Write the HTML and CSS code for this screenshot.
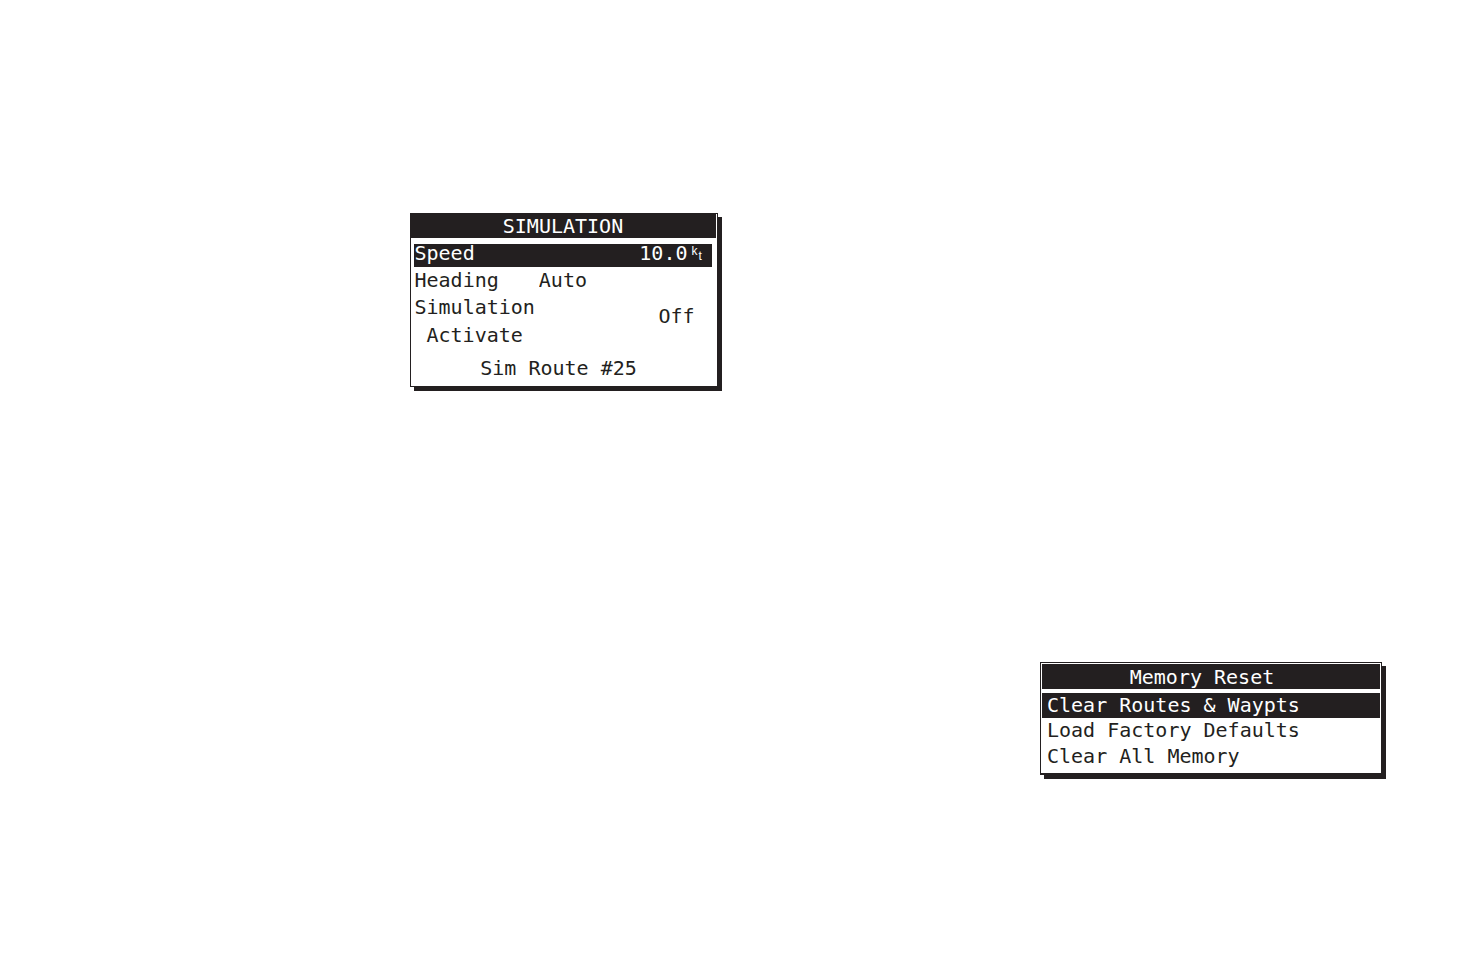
FILE: index.html
```html
<!DOCTYPE html>
<html lang="en">
<head>
<meta charset="utf-8">
<title>Simulation and Memory Reset</title>
<link rel="stylesheet" href="styles.css">
</head>
<body>
<main class="spread">
  <section class="page page-left">
    <form class="dialog simulation">
      <h2 class="title">SIMULATION</h2>
      <div class="fields">
        <div class="row speed">
          <label for="speed">Speed</label>
          <input class="value number" id="speed" type="text" value="10.0">
          <span class="unit"><span>k</span><span class="low">t</span></span>
        </div>
        <div class="row heading">
          <label for="heading">Heading</label>
          <select class="value" id="heading"><option>Auto</option></select>
        </div>
        <div class="row mode">
          <label for="mode">Simulation<br><span class="indent">Activate</span></label>
          <select class="value" id="mode"><option>Off</option></select>
        </div>
      </div>
      <p class="route">Sim Route #25</p>
    </form>
  </section>
  <section class="page page-right">
    <div class="dialog memory">
      <h2 class="title">Memory Reset</h2>
      <button class="item selected" type="button">Clear Routes &amp; Waypts</button>
      <button class="item" type="button">Load Factory Defaults</button>
      <button class="item" type="button">Clear All Memory</button>
    </div>
  </section>
</main>
</body>
</html>
```
FILE: styles.css
```css
* {
  box-sizing: border-box;
}

body {
  margin: 0;
  background: #fff;
  color: #231f20;
  font: 20px/26px "DejaVu Sans Mono", monospace;
}

.spread {
  display: grid;
  grid-template-columns: 1fr 1fr;
  min-height: 100vh;
}

.page {
  display: flex;
  align-items: flex-start;
  justify-content: flex-end;
}

.page-left {
  padding: 213px 20px 0 0;
}

.page-right {
  padding: 662px 93px 0 0;
}

.dialog {
  border: 1px solid #231f20;
  background: #fff;
  box-shadow: 4px 4px #231f20;
}

.title {
  margin: 0;
  background: #231f20;
  color: #fff;
  font-size: 20px;
  font-weight: normal;
  line-height: 24px;
  text-align: center;
}

.value {
  margin: 0;
  padding: 0;
  border: 0;
  background: none;
  color: inherit;
  font: inherit;
  appearance: none;
}

/* Simulation */
.simulation {
  width: 308px;
}

.simulation .title {
  margin-right: 1px;
}

.fields {
  padding: 6px 5px 0 3px;
}

.row {
  display: flex;
}

.row label {
  padding-left: 1px;
}

.speed {
  height: 23px;
  background: #231f20;
  color: #fff;
  line-height: 18px;
}

.number {
  width: 52px;
  height: 18px;
  margin-left: auto;
  text-align: right;
}

.unit {
  display: flex;
  gap: 1px;
  width: 24px;
  padding-left: 4px;
  font: 12px/14px "Liberation Sans", sans-serif;
}

.low {
  padding-top: 5px;
}

.heading {
  gap: 40px;
  line-height: 26px;
}

.mode {
  align-items: center;
  justify-content: space-between;
  padding-right: 16px;
  line-height: 28px;
}

.indent {
  padding-left: 12px;
}

.mode .value {
  margin-bottom: 10px;
}

.route {
  margin: 6px 0 5px;
  padding-right: 10px;
  text-align: center;
}

/* Memory reset */
.memory {
  display: flex;
  flex-direction: column;
  width: 342px;
  padding: 1px 1px 3px;
  border-bottom-width: 2px;
}

.memory .title {
  margin-bottom: 4px;
  padding: 1px 18px 0 0;
}

.item {
  padding: 0 0 0 5px;
  border: 0;
  background: none;
  color: inherit;
  font: inherit;
  line-height: 24px;
  padding-bottom: 2px;
  text-align: left;
}

.selected {
  height: 25px;
  background: #231f20;
  color: #fff;
}
```
